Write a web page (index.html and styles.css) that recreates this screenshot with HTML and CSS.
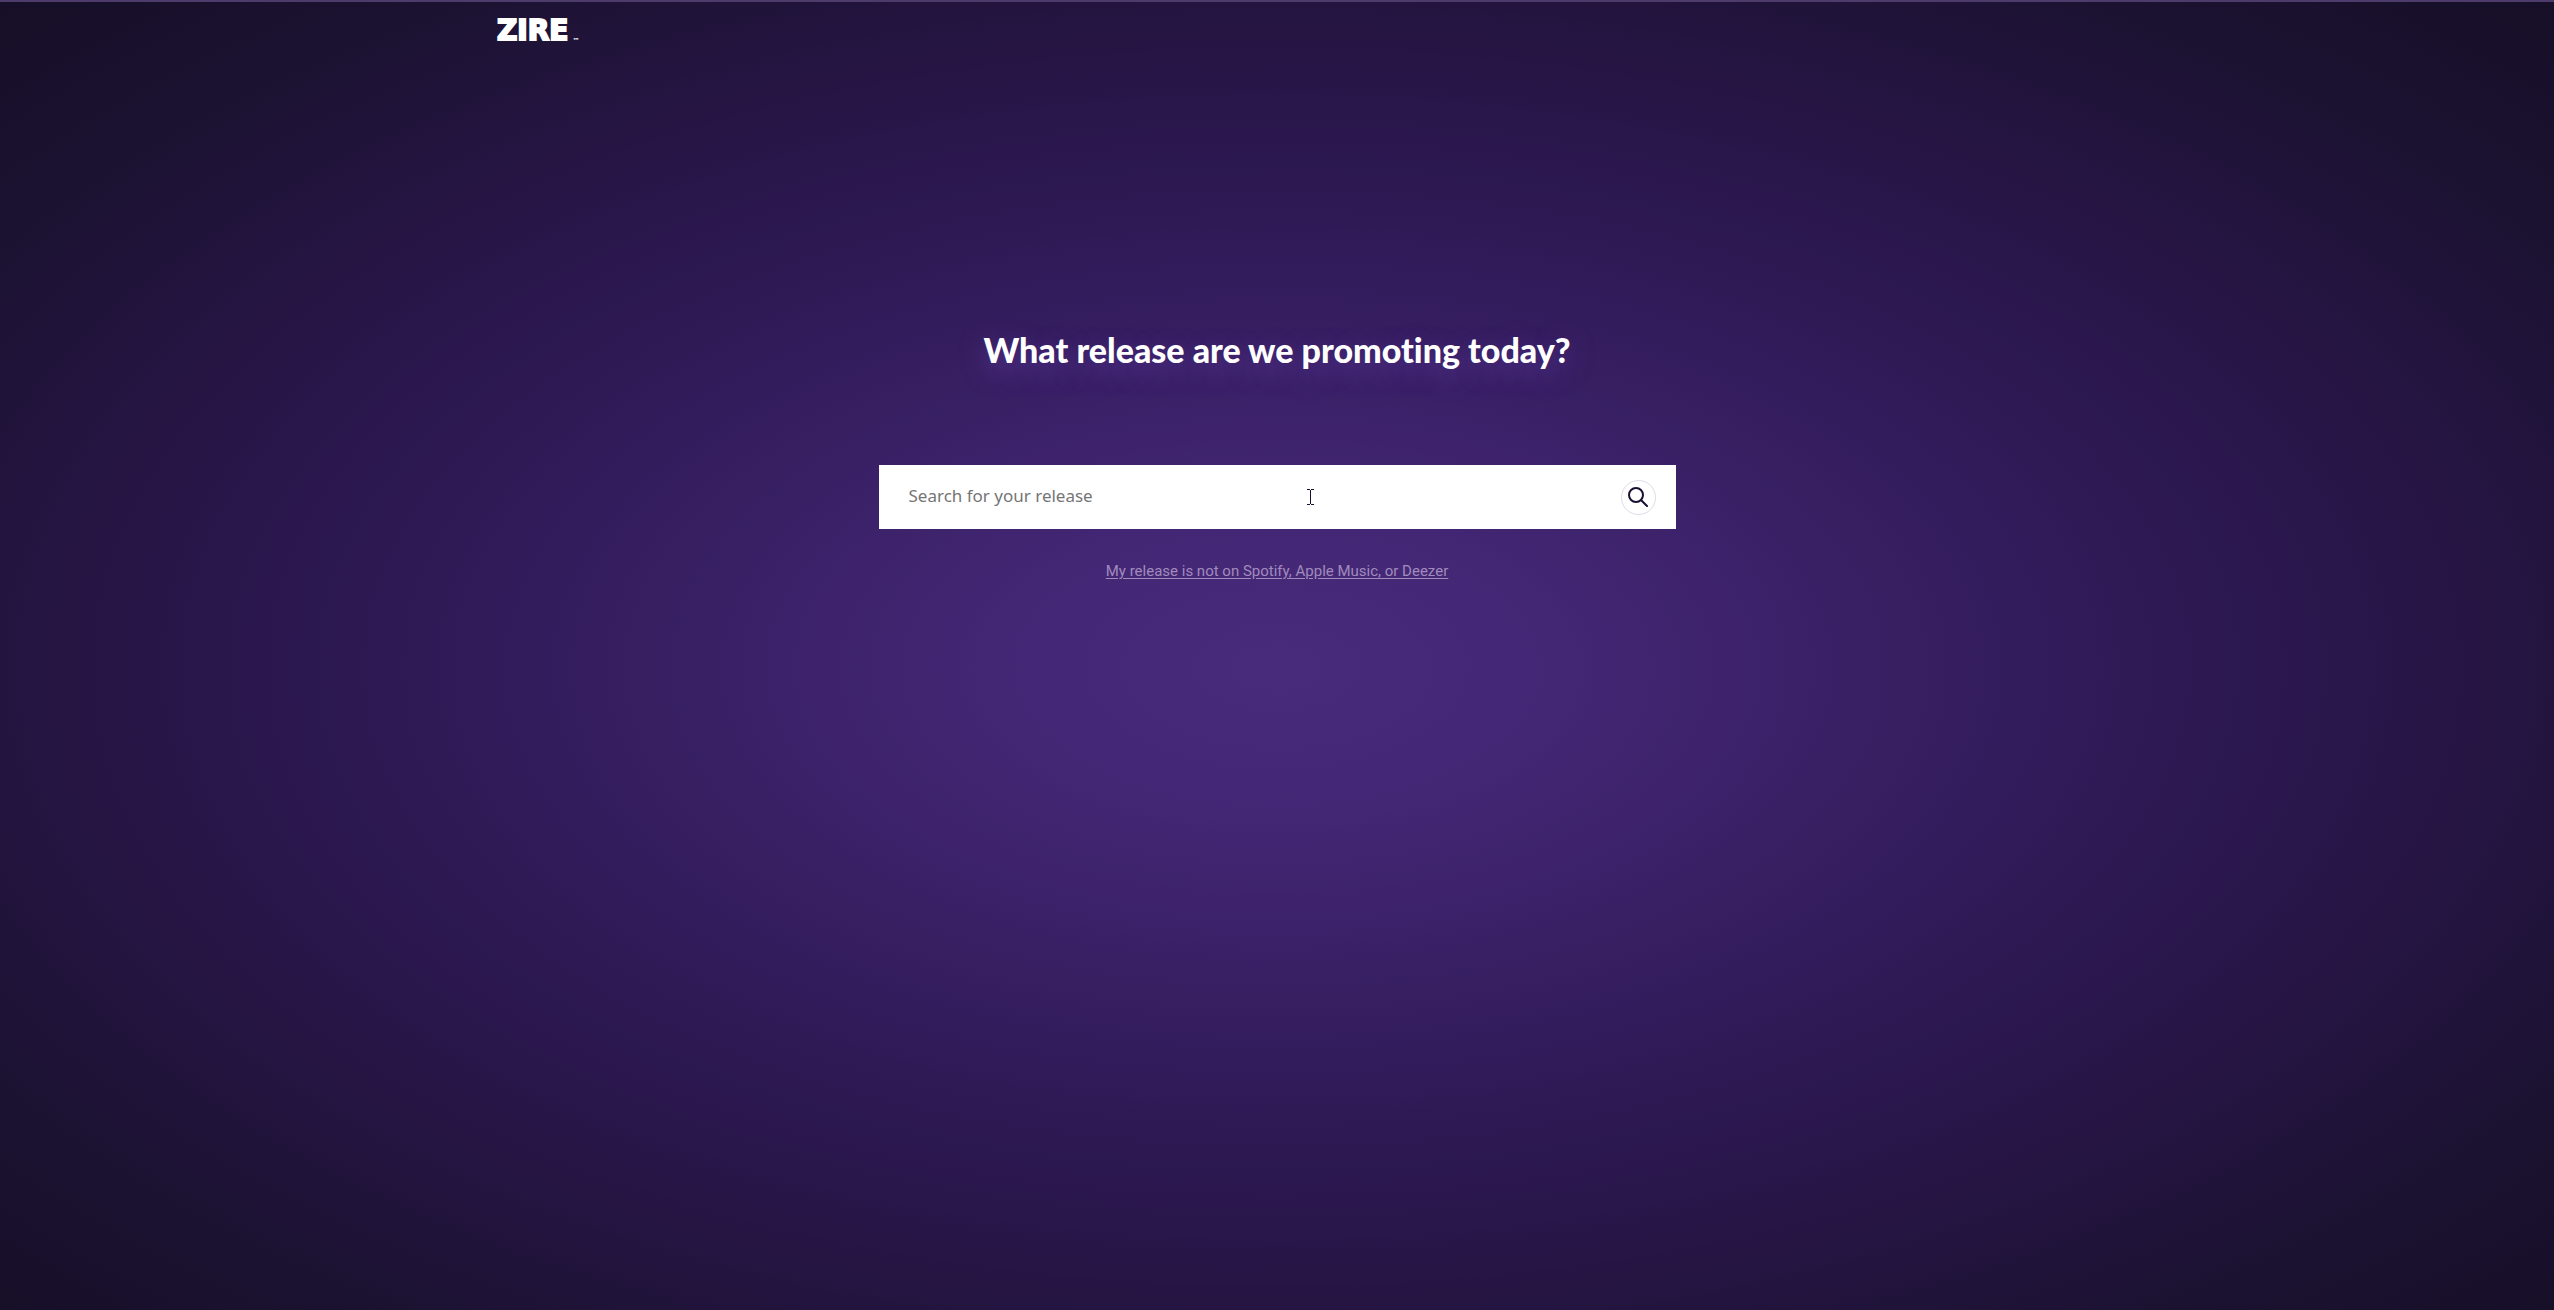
FILE: index.html
```html
<!DOCTYPE html>
<html lang="en">
<head>
  <meta charset="UTF-8">
  <meta name="viewport" content="width=device-width, initial-scale=1">
  <title>ZIRE</title>
  <link rel="stylesheet" href="styles.css">
</head>
<body>
  <header class="header">
    <a href="#" class="logo">ZIRE<span class="logo-tm">™</span></a>
  </header>

  <main class="main">
    <h1 class="title">What release are we promoting today?</h1>

    <form class="search">
      <input type="text" class="search-input" name="release" placeholder="Search for your release" aria-label="Search for your release">
      <button type="submit" class="search-button" aria-label="Search">
        <svg width="20" height="20" viewBox="0 0 20 20" fill="none" stroke="#1a0f33" stroke-width="2" stroke-linecap="round">
          <circle cx="8" cy="8" r="7"/>
          <path d="M13.2 13.2L19 19"/>
        </svg>
      </button>
      <svg class="cursor" width="7" height="16" viewBox="0 0 7 16" fill="none" stroke="#1a0f33" shape-rendering="crispEdges">
        <path d="M0 .5h3M4 .5h3M3.5 1v14M0 15.5h3M4 15.5h3"/>
      </svg>
    </form>

    <a href="#" class="manual-link">My release is not on Spotify, Apple Music, or Deezer</a>
  </main>
</body>
</html>
```

FILE: styles.css
```css
* {
  box-sizing: border-box;
}
body {
  margin: 0;
  min-height: 100vh;
  border-top: 2px solid #4d3b6b;
  background: radial-gradient(ellipse at 50% 51%, #482c7b 0%, #432674 16%, #3a2167 30%, #301a57 46%, #29164a 60%, #23143f 71%, #1b1231 84%, #160f27 100%);
  color: #fff;
  font-family: "Noto Sans", sans-serif;
}
.header {
  width: 100%;
  max-width: 1560px;
  margin: 0 auto;
  padding: 12px 0;
}
.logo {
  display: flex;
  align-items: flex-end;
  height: 34px;
  color: #fff;
  font-family: "DejaVu Sans", sans-serif;
  font-size: 28px;
  font-weight: 700;
  line-height: 34px;
  text-decoration: none;
  -webkit-text-stroke: 2px #fff;
}
.logo-tm {
  margin-left: 4px;
  font-size: 7px;
  font-weight: 700;
  line-height: 14px;
  -webkit-text-stroke: 0;
}
.main {
  display: flex;
  flex-direction: column;
  align-items: center;
  padding: 262px 16px 48px;
}
.title {
  margin: 0;
  font-family: Lato, sans-serif;
  font-size: 34px;
  font-weight: 900;
  line-height: 56px;
  font-variant-ligatures: none;
  text-shadow: 0 8px 24px #5a3898;
}
.search {
  position: relative;
  display: flex;
  align-items: center;
  width: 100%;
  max-width: 797px;
  height: 64px;
  margin: 87px 0 30px;
  padding: 0 20px 0 30px;
  background: #fff;
}
.search-input {
  flex: 1;
  height: 100%;
  padding: 0 0 4px;
  border: 0;
  outline: 0;
  background: none;
  color: #1a0f33;
  font-family: "Noto Sans", sans-serif;
  font-size: 17px;
}
.search-input::placeholder {
  color: #757575;
}
.search-button {
  display: flex;
  align-items: center;
  justify-content: center;
  width: 35px;
  height: 35px;
  padding: 0;
  border: 1px solid #dfdbe8;
  border-radius: 50%;
  background: #fff;
  cursor: pointer;
}
.cursor {
  position: absolute;
  top: 24px;
  left: 428px;
}
.manual-link {
  color: #a18bbd;
  font-family: Roboto, sans-serif;
  font-size: 15px;
  line-height: 24px;
  text-underline-offset: 2px;
}
```
